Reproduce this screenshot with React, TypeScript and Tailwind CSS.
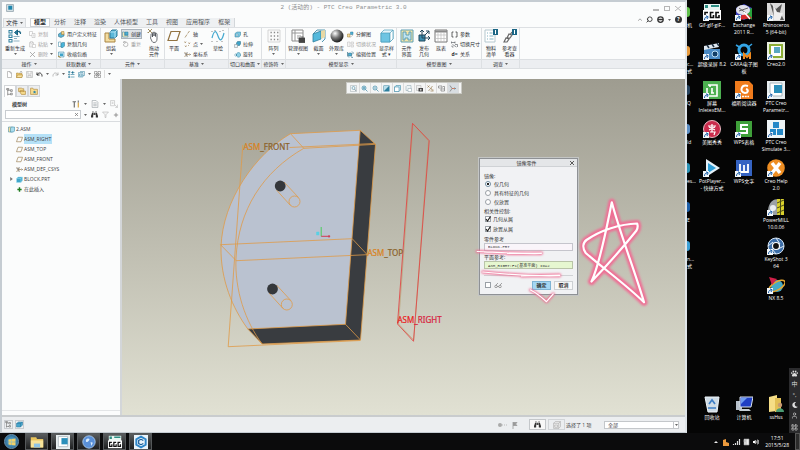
import React, { ReactNode, useState } from "react";
import { FaPaw, FaMoon, FaVolumeUp, FaWindows, FaBinoculars } from "react-icons/fa";
import { Search, User, LayoutGrid } from "lucide-react";

type IconProps = { name: string; className?: string };

const TEAL = "#2f7f9d";
const DARK = "#4a4f55";

// all toolbar drawings share a 14 x 14 grid
const glyphs: Record<string, ReactNode> = {
  regenerate: (
    <g fill="none" strokeWidth="1">
      <rect x="1" y="1.5" width="3" height="2.5" stroke={TEAL} />
      <rect x="1" y="6" width="3" height="2.5" stroke={TEAL} />
      <rect x="1" y="10.5" width="3" height="2.5" stroke={TEAL} />
      <path d="M5.5 7.5h6M5.5 12h6M6 9.5h3" stroke="#8fb3c4" />
      <path d="M6.5 3.5l3-2.5v5zM10 2.5c2-.8 3 .4 2.5 2.5" stroke="#16607f" fill="#2b7d9c" />
    </g>
  ),
  copy: (
    <g fill="#fff" stroke="#b0b0b0">
      <path d="M1 1h6v8H1z" />
      <path d="M6 5h6v8H6zM8 8h3M8 10h3" />
    </g>
  ),
  paste: (
    <g fill="#eee" stroke="#b5b5b5">
      <path d="M1 3h8v9H1z" />
      <path d="M3 1h4v3H3zM7 7h6v6H7z" fill="#fff" />
    </g>
  ),
  cross: <path d="M2 2l10 10M12 2L2 12" stroke="#999" strokeWidth="1.5" fill="none" />,
  userFeature: (
    <g>
      <path d="M1 6l5-3 6 2v5l-6 3-5-2z" fill="#5db4d4" stroke="#23627e" />
      <path d="M7 1h5v6H7z" fill="#f0d28a" stroke="#a07830" />
    </g>
  ),
  copyGeom: (
    <g>
      <path d="M1 2h5v9H1z" fill="#fff" stroke={TEAL} />
      <path d="M6 5l3-2h4v7l-3 3H6z" fill="#49b4d8" stroke="#28728f" />
    </g>
  ),
  shrink: (
    <g>
      <path d="M1 2h11v10H1z" fill="#cfe9f3" stroke={TEAL} />
      <path d="M4 5h6v5H4z" fill="#3ea3c8" />
      <path d="M0 10l5 3" stroke="#b98a2b" strokeWidth="2" />
    </g>
  ),
  assemble: (
    <g>
      <path d="M1 4h4v6h6v3H1z" fill="#f3dda0" stroke="#a98544" />
      <path d="M6 3l2-2h5v6l-2 2H6z" fill="#5ab8da" stroke="#2b7898" />
      <path d="M6 3h5v6M11 3l2-2" fill="none" stroke="#d5f1fb" strokeWidth=".7" />
    </g>
  ),
  create: (
    <g>
      <path d="M1 2h4v7h7v3H1z" fill="#f7e8b9" stroke={TEAL} />
      <path d="M6 2h6v6H6z" fill="#4fb0d4" stroke="#2b7898" />
    </g>
  ),
  repeat: (
    <path d="M3 6a4.500 4.500 0 1 0 3-3.500M6 0v5l-4-2.500z" fill="none" stroke="#999" strokeWidth="1.2" />
  ),
  hand: (
    <g fill="none" strokeWidth=".8">
      <path d="M4 7V5.500c0-1 1.500-1 1.500 0V8 4c0-1 1.500-1 1.500 0v3-3c0-1 1.500-1 1.500 0v3.500V5c0-1 1.500-.8 1.500 0v5c0 2-1 3.500-3 3.500S5 12 3.500 9z" fill="#fff" stroke={DARK} />
      <path d="M1 0l4 4M5 0L1 4M1 4v-1M1 0h1" stroke="#8c7440" />
    </g>
  ),
  plane: <path d="M4 2.500h9l-3 9H1z" fill="none" stroke="#927342" strokeWidth="1.200" />,
  axis: <path d="M2 13L6 7M8 4l3-4M6.500 6l.8-1" stroke="#8d6d3b" strokeWidth="1.300" fill="none" />,
  points: <path d="M1 1l3 3M4 1L1 4M9 3l3 3M12 3L9 6M2 9l3 3M5 9l-3 3M8 9h2" stroke="#8d6d3b" fill="none" />,
  csys: (
    <g fill="none" stroke="#8d6d3b">
      <path d="M4 7h9M4 7l-3-5M4 7l-3 5M4 3l4 4-4 4" />
      <path d="M11 5l2 2-2 2M1 4l3 3M7 2l-3 5 3 5" stroke={DARK} />
    </g>
  ),
  sketch: (
    <g fill="none">
      <path d="M1 9c2-8 4-8 6-2s4 5 6-3" stroke="#46a9cf" strokeWidth="1.200" />
      <path d="M1 2v1M4 1v1M9 2v1M12 1v1M1 12v1M6 12v1M11 12v1" stroke="#888" />
    </g>
  ),
  hole: (
    <g>
      <path d="M2 5l4-3h7v6l-3 4H2z" fill="#7dc8e2" stroke={TEAL} />
      <ellipse cx="6" cy="8" rx="2" ry="2.500" fill="#fff" stroke={TEAL} />
    </g>
  ),
  extrude: (
    <g>
      <path d="M5 4l2-3h6v5l-2 3H5z" fill="#3ea3c8" stroke="#23657f" />
      <path d="M1 7h6v6H1z" fill="#e3f4fa" stroke="#888" />
    </g>
  ),
  revolve: (
    <g>
      <path d="M5 6c2-4 6-4 8 0v4c-2 3-6 3-8 0z" fill="#8fd0e6" stroke={TEAL} />
      <path d="M0 8h6M3 5l3 3-3 3" fill="none" stroke={TEAL} />
    </g>
  ),
  pattern: (
    <g>
      <path d="M1 1h12v12H1z" fill="#fafafa" stroke="#c5c5c5" strokeWidth=".7" />
      <path d="M3.500 3.500h8M3.500 7h8M3.500 10.500h8" stroke="#888" strokeWidth="1.300" strokeDasharray="1.300 2" />
    </g>
  ),
  viewManager: (
    <g>
      <path d="M1 1h11v11H1z" fill="#fff" stroke="#8b8b8b" />
      <path d="M1 4h11M4 1v11M6 7h4M6 9h3" stroke="#999" />
      <path d="M8 9h6v4.500H8zM9.500 8h3" fill="#444" stroke="#444" strokeWidth=".8" />
    </g>
  ),
  section: (
    <g>
      <path d="M1 5l4-4h8v9l-3 3" fill="#eaf6fb" stroke={TEAL} strokeWidth=".8" />
      <path d="M1 5l8-3v8l-8 3z" fill="#54b9dc" stroke={TEAL} strokeWidth=".8" />
      <path d="M13 1L9 2v8l4-2z" fill="#e8d8a3" />
    </g>
  ),
  explode: (
    <g>
      <path d="M1 6h5v6H1z" fill="#f3dda0" stroke="#9c7a35" />
      <path d="M7 2h5v5H7z" fill="#4fb0d4" stroke={TEAL} />
      <path d="M6 13l6-5" stroke="#999" />
    </g>
  ),
  toggleState: (
    <g fill="#f3f3f3" stroke="#b8b8b8">
      <path d="M1 2h5v9H1zM8 2h5v4H8zM8 8h5v4H8z" />
    </g>
  ),
  editPos: (
    <g fill="none" stroke="#23657f">
      <path d="M3 4h6v6H3z" fill="#4fb0d4" />
      <path d="M1 2v8l3 3M10 1l3 3-3 3M8 12l4 1" strokeWidth="1.300" />
    </g>
  ),
  cube: (
    <g stroke="#4b9dba" strokeWidth=".7">
      <path d="M1 4l3-3h9v9l-3 3H1z" fill="#e8f5fa" />
      <path d="M1 4h9v9H1z" fill="#6ec4e2" />
      <path d="M10 4l3-3v9l-3 3z" fill="#fff" />
    </g>
  ),
  shaded: (
    <g stroke={TEAL}>
      <path d="M1 4l3-3h9v9l-3 3H1z" fill="#bfe3ef" />
      <path d="M1 4h9v9H1z" fill="#fff" />
    </g>
  ),
  compIface: (
    <g fill="#f6e5a8" stroke="#5d9fb4">
      <path d="M1 1h12v12H1z" />
      <path d="M3 3h3v3h3V3h2v8H8V9H5v2H3z" fill="#bfe3ef" />
    </g>
  ),
  publish: (
    <g fill="none" stroke="#23495c">
      <path d="M2 6h6v6H2z" fill="#3c8fb0" />
      <path d="M5 9V1M3 3l2-2 2 2M5 9h8M11 7l2 2-2 2M8 6l4-4M9 2h3v3" />
    </g>
  ),
  table: (
    <g fill="none">
      <path d="M1 1h12v12H1z" fill="#fff" stroke="#777" />
      <path d="M1 2.500h12" stroke="#8a8a8a" strokeWidth="2" />
      <path d="M1 6h12M1 9.500h12M4 3v10M7 3v10M10 3v10" stroke="#bbb" strokeWidth=".7" />
    </g>
  ),
  params: <path d="M5 2H2v10h3M9 2h3v10H9" fill="none" stroke="#333" strokeWidth="1.500" />,
  dims: <path d="M1 3h7M1 1v4M8 1v4M3 7l8 5M8 7h5v5M2 9v3h3" fill="none" stroke={DARK} strokeWidth="1.200" />,
  bom: (
    <g>
      <path d="M1 1h10v12H1z" fill="#fff" stroke="#b5c8cf" />
      <path d="M3 4h1M3 7h1M3 10h1M5.500 4h3M5.500 7h4M5.500 10h4" stroke="#83b3c2" />
      <path d="M9 0h5v6H9z" fill="#1b6685" />
      <path d="M11.500 1v4" stroke="#fff" />
    </g>
  ),
  refViewer: (
    <g fill="none" stroke="#666">
      <path d="M1 13l2-4 3 1-2 3zM4 9l2-4 3 1-2 3zM7 6l2-3" strokeWidth="1.200" />
      <path d="M9 0h5v6H9z" fill="#1b6685" stroke="none" />
      <path d="M11.500 1v4" stroke="#fff" />
    </g>
  ),
  newFile: <path d="M3 1h5l3 3v9H3zM8 1v3h3" fill="#fff" stroke="#888" />,
  openFile: (
    <g stroke="#a8802f">
      <path d="M1 4h4l1 1h6v8H1z" fill="#e9c66f" />
      <path d="M3 8h11l-3 5H1z" fill="#f8e4a5" />
      <path d="M8 3c1-3 4-2 4 0" fill="none" stroke="#444" />
    </g>
  ),
  save: <path d="M1 1h12v12H1zM4 1v5h6V1M4 13V9h6v4" fill="#eee" stroke="#aaa" />,
  undo: <path d="M2 3v5h5M2 8c3-6 9-5 10 1v2" fill="none" stroke="#333" strokeWidth="2" />,
  redo: <path d="M12 3v5H7M12 8C9 2 3 3 2 9v2" fill="none" stroke="#aaa" strokeWidth="1.600" />,
  regenSmall: (
    <g fill="none" stroke={TEAL} strokeWidth="1.300">
      <path d="M1 1h3v2H1zM1 6h3v2H1zM1 11h3v2H1zM6 7h7M6 12h7" />
      <path d="M7 3l3-2v4zM10 3h3" fill="#16607f" />
    </g>
  ),
  winDrop: (
    <g fill="none" stroke={TEAL}>
      <path d="M1 3h9v9H1z" fill="#e0f1f7" />
      <path d="M4 1h9v8h-3M3 6h5v4H3z" />
    </g>
  ),
  closeWin: <path d="M1 1h5v5H1zM8 1h5v5H8zM1 8h5v5H1zM8 8h5v5H8zM4 4l6 6M10 4l-6 6" fill="none" stroke="#666" />,
  treeTab: (
    <g fill="none" stroke="#555">
      <path d="M3 1v12M3 4h5M3 11h5" />
      <path d="M1 1h4v2H1zM8 3h3v3H8zM8 9h3v3H8z" fill="#fff" />
    </g>
  ),
  folders: <path d="M1 2h5l1 1h3v5H1zM4 6h4l1 1h4v6H6L4 10z" fill="#f6dc90" stroke="#a77d2c" />,
  favFolder: (
    <g>
      <path d="M1 2h4l1 2h7v9H1z" fill="#f6dc90" stroke="#a77d2c" />
      <path d="M8 6l1 2h2l-1.500 1.500.5 2L8 10.500l-2 1 .5-2L5 8h2z" fill="#2e86aa" />
    </g>
  ),
  tools: (
    <g fill="none" strokeWidth="2">
      <path d="M1 3h6M4 3v10" stroke="#6b6b6b" />
      <path d="M11 1v4" stroke="#777" />
      <path d="M11 5v8" stroke="#d6a33b" />
    </g>
  ),
  list: <path d="M2 1h7l3 3v9H2zM4 5h6M4 7.500h6M4 10h6" fill="#fff" stroke="#8a9298" />,
  listOff: <path d="M1 1h7v9H1zM3 4h3M3 6h3M8 8l5 5M13 8v5H9" fill="none" stroke="#b5b5b5" />,
  filter: <path d="M1 2h12L8 7.500V13H6V7.500z" fill="#f5f5f5" stroke="#aaa" />,
  plus: <path d="M7 2v10M2 7h10" stroke="#888" strokeWidth="2" fill="none" />,
  insert: <path d="M7 1v12M1 7h12" stroke="#1f7a1f" strokeWidth="4" fill="none" />,
  asm: (
    <g>
      <path d="M1 2h8v10H1z" fill="#f4df9f" stroke={TEAL} />
      <path d="M5 4l2-2h6v8l-2 2H5z" fill="#a9dcee" stroke={TEAL} />
    </g>
  ),
  part: <path d="M1 5l3-3h9v7l-3 4H1zM1 5h9v7M10 5l3-3" fill="#3fa5ca" stroke="#a6e0f3" />,
  refit: (
    <g fill="none" stroke="#7b8a92">
      <path d="M1 1h12v12H1z" strokeWidth=".7" />
      <circle cx="7" cy="6" r="3" stroke={TEAL} />
      <path d="M9 8l3 4" strokeWidth="1.500" />
    </g>
  ),
  zoomIn: (
    <g fill="none" stroke={TEAL} strokeWidth="1.300">
      <circle cx="6" cy="6" r="4" fill="#d5edf6" />
      <path d="M9 9l4 4M4 6h4M6 4v4" />
    </g>
  ),
  zoomOut: (
    <g fill="none" stroke={TEAL} strokeWidth="1.300">
      <circle cx="6" cy="6" r="4" fill="#e9f5fa" />
      <path d="M9 9l4 4M4 6h4" />
    </g>
  ),
  repaint: (
    <g>
      <path d="M1 1h12v12H1z" fill="#2c7f9e" />
      <path d="M2 2h10L2 12z" fill="#b9deea" />
    </g>
  ),
  saved: (
    <g fill="#eef3f5" stroke="#8aa2ac">
      <path d="M2 3l2-2h8v8l-2 2H2z" />
      <path d="M6 7h7v6H6z" fill="#fff" />
    </g>
  ),
  camera: (
    <g>
      <path d="M1 1h9v10H1z" fill="#eee" stroke="#aaa" />
      <path d="M5 6h9v7H5z" fill="#444" />
      <circle cx="9.500" cy="9.500" r="1.800" fill="#ccc" />
    </g>
  ),
  datums: <path d="M1 1l4 4M5 1L1 5M3 12L11 2M8 6l2 4h3M7 12h6" fill="none" stroke="#8d6d3b" strokeWidth="1.200" />,
  annot: <path d="M1 2h7v4H1zM6 8h7v4H6zM10 3h3v5" fill="#fff" stroke="#666" strokeWidth="1.200" />,
  spin: (
    <g fill="none" strokeWidth="1.300">
      <path d="M2 1l4 6-4 6" stroke="#666" />
      <path d="M6 7h7" stroke="#c8502c" />
      <path d="M11 5l2 2-2 2" stroke={TEAL} />
    </g>
  ),
  model3d: <path d="M1 5l4-3h8v6l-4 4H1zM1 5h8v7M9 5l4-3" fill="#48a5cc" stroke="#26759a" />,
  boxSel: <path d="M1 4l3-3h9v9l-3 3H1zM1 4h9v9M10 4l3-3M3 7h5v4H3z" fill="#eee" stroke="#a5a5a5" />,
};

const Ico = ({ name, className = "size-[7px]" }: IconProps) => (
  <svg viewBox="0 0 14 14" className={`${className} shrink-0`} aria-hidden="true">
    {name === "sphere" ? (
      <>
        <defs>
          <radialGradient id="ball" cx=".35" cy=".3" r=".7">
            <stop offset="0" stopColor="#fff" />
            <stop offset=".5" stopColor="#777" />
            <stop offset="1" stopColor="#1d1d1d" />
          </radialGradient>
        </defs>
        <circle cx="7" cy="7" r="6.500" fill="url(#ball)" />
      </>
    ) : (
      glyphs[name]
    )}
  </svg>
);

const Caret = () => (
  <svg viewBox="0 0 6 4" className="h-[2px] w-[3px] shrink-0" aria-hidden="true">
    <path d="M0 0h6L3 4z" fill="#666" />
  </svg>
);

const Big = ({ icon, lines, caret, w = "w-[22px]" }: { icon: string; lines: string[]; caret?: boolean; w?: string }) => (
  <button className={`${w} flex shrink-0 flex-col items-center`}>
    <Ico name={icon} className="size-[14px]" />
    <span className="mt-[2px] flex flex-col whitespace-nowrap">
      {lines.map((l) => (
        <span key={l}>{l}</span>
      ))}
    </span>
    {caret && <span className="mt-[2px] flex"><Caret /></span>}
  </button>
);

type SmallItem = { icon?: string; mark?: string; text: string; off?: boolean; caret?: boolean; on?: boolean };

const Stack = ({ items }: { items: SmallItem[] }) => (
  <div className="flex flex-col">
    {items.map((it) => (
      <button
        key={it.text}
        className={`flex h-[10px] items-center gap-[2px] px-px whitespace-nowrap ${
          it.off ? "text-[#a3a3a3]" : ""
        } ${it.on ? "bg-[#dfe3e7] outline outline-[#aab3bb] -outline-offset-1" : ""}`}
      >
        {it.icon ? <Ico name={it.icon} /> : <b className="w-[7px]">{it.mark}</b>}
        {it.text}
        {it.caret && <Caret />}
      </button>
    ))}
  </div>
);

const Group = ({ title, w, children }: { title: string; w: string; children: ReactNode }) => (
  <section className={`${w} flex shrink-0 flex-col border-r border-[#dde0e3]`}>
    <div className="flex h-[31px] pt-px">{children}</div>
    <div className="flex h-[10px] items-center justify-center gap-[2px] border-y border-[#dcdfe2] bg-[#eceef1] whitespace-nowrap">
      {title}
      <Caret />
    </div>
  </section>
);

const tabs = ["模型", "分析", "注释", "渲染", "人体模型", "工具", "视图", "应用程序", "框架"];

const Ribbon = () => {
  const [active, setActive] = useState("模型");

  return (
    <header className="bg-[#fbfcfc] text-[5px] leading-[6px] text-[#2c2f33]">
      <div className="flex h-[16px] items-center pr-[4px] pb-[4px] pl-[4px]">
        <svg viewBox="0 0 14 14" className="size-[8px]" aria-hidden="true">
          <path d="M1 1h12v12H1z" fill="#dce6ea" stroke="#69808c" />
          <path d="M4 3h7v7H4z" fill="#1f86ad" />
        </svg>
        <h1 className="flex-1 pl-[20px] text-center font-['Liberation_Mono','Noto_Sans_CJK_SC',monospace] text-[6px] text-[#8d8f91]">
          2 (活动的) - PTC Creo Parametric 3.0
        </h1>
        <div className="flex gap-[5px] text-[#b5b5b5]">
          <button aria-label="最小化" className="flex h-[5px] w-[6px] items-end"><i className="block h-[2px] w-full border border-current" /></button>
          <button aria-label="最大化" className="h-[5px] w-[6px] border border-current" />
          <button aria-label="关闭" className="h-[5px] w-[6px]">
            <svg viewBox="0 0 6 5"><path d="M0 0l6 5M6 0L0 5" stroke="currentColor" /></svg>
          </button>
        </div>
      </div>

      <div className="flex h-[10px] items-end border-b border-[#dde0e3] pl-px text-[6px] leading-[9px]">
        <button className="mr-[4px] flex w-[23px] items-center justify-center gap-[2px] border border-b-0 border-[#d9dcdf] bg-[#eef0f2] leading-[8px]">
          文件
          <Caret />
        </button>
        <nav className="flex border-r border-[#d3d7da] bg-[#eef0f2]">
          {tabs.map((t) => (
            <button
              key={t}
              onClick={() => setActive(t)}
              className={`h-[9px] px-[4px] whitespace-nowrap ${
                t === active ? "bg-white font-bold outline outline-[#cfd3d7] -outline-offset-1" : "text-[#55595d]"
              }`}
            >
              {t}
            </button>
          ))}
        </nav>
        <div className="ml-auto flex items-center gap-[4px] pr-[3px] pb-[4px] text-[#333]">
          <svg viewBox="0 0 6 4" className="h-[3px] w-[4px]"><path d="M0 4l3-3 3 3" fill="none" stroke="#777" /></svg>
          <Search className="size-[7px] -scale-x-100" strokeWidth={3} />
          <svg viewBox="0 0 14 14" className="size-[7px]" aria-hidden="true">
            <circle cx="7" cy="7" r="5.500" fill="#fff" stroke="#333" strokeWidth="2.500" />
            <path d="M2 7h10" stroke="#333" strokeWidth="3" />
          </svg>
          <Caret />
          <span className="grid size-[7px] place-items-center rounded-full bg-[#333] text-[5px] leading-none font-bold text-white">?</span>
        </div>
      </div>

      <div className="flex">
        <Group title="操作" w="w-[55px]">
          <Big icon="regenerate" lines={["重新生成"]} caret w="w-[26px]" />
          <Stack
            items={[
              { icon: "copy", text: "复制", off: true },
              { icon: "paste", text: "粘贴", off: true, caret: true },
              { icon: "cross", text: "删除", off: true, caret: true },
            ]}
          />
        </Group>
        <Group title="获取数据" w="w-[44px]">
          <Stack
            items={[
              { icon: "userFeature", text: "用户定义特征" },
              { icon: "copyGeom", text: "复制几何" },
              { icon: "shrink", text: "收缩包络" },
            ]}
          />
        </Group>
        <Group title="元件" w="w-[64px]">
          <Big icon="assemble" lines={["组装"]} caret w="w-[20px]" />
          <Stack
            items={[
              { icon: "create", text: "创建", on: true },
              { icon: "repeat", text: "重复", off: true },
            ]}
          />
          <Big icon="hand" lines={["拖动", "元件"]} w="w-[24px]" />
        </Group>
        <Group title="基准" w="w-[64px]">
          <Big icon="plane" lines={["平面"]} w="w-[18px]" />
          <Stack
            items={[
              { icon: "axis", text: "轴" },
              { icon: "points", text: "点", caret: true },
              { icon: "csys", text: "坐标系" },
            ]}
          />
          <Big icon="sketch" lines={["草绘"]} w="w-[18px]" />
        </Group>
        <Group title="切口和曲面" w="w-[33px]">
          <div className="pl-[4px]">
            <Stack
              items={[
                { icon: "hole", text: "孔" },
                { icon: "extrude", text: "拉伸" },
                { icon: "revolve", text: "旋转" },
              ]}
            />
          </div>
        </Group>
        <Group title="修饰符" w="w-[24px]">
          <Big icon="pattern" lines={["阵列"]} caret w="w-[23px]" />
        </Group>
        <Group title="模型显示" w="w-[111px]">
          <Big icon="viewManager" lines={["管理视图"]} caret w="w-[24px]" />
          <Big icon="section" lines={["截面"]} caret w="w-[17px]" />
          <Big icon="sphere" lines={["外观库"]} caret w="w-[19px]" />
          <Stack
            items={[
              { icon: "explode", text: "分解图" },
              { icon: "toggleState", text: "切换状况", off: true },
              { icon: "editPos", text: "编辑位置" },
            ]}
          />
          <Big icon="cube" lines={["显示样", "式 ▾"]} w="w-[19px]" />
        </Group>
        <Group title="模型意图" w="w-[85px]">
          <Big icon="compIface" lines={["元件", "界面"]} w="w-[19px]" />
          <Big icon="publish" lines={["发布", "几何"]} w="w-[16px]" />
          <Big icon="table" lines={["族表"]} w="w-[18px]" />
          <Stack
            items={[
              { icon: "params", text: "参数" },
              { icon: "dims", text: "切换尺寸" },
              { mark: "d=", text: "关系" },
            ]}
          />
        </Group>
        <Group title="调查" w="w-[38px]">
          <Big icon="bom" lines={["物料", "清单"]} w="w-[18px]" />
          <Big icon="refViewer" lines={["参考查", "看器"]} w="w-[19px]" />
        </Group>
        <div className="flex flex-1 flex-col justify-end">
          <div className="h-[10px] border-y border-[#dcdfe2] bg-[#eceef1]" />
        </div>
      </div>

      <div className="flex h-[10px] items-center gap-[3px] pl-[4px]">
        <Ico name="newFile" />
        <Ico name="openFile" />
        <Ico name="save" />
        <Ico name="undo" />
        <Caret />
        <Ico name="redo" />
        <Caret />
        <Ico name="regenSmall" />
        <Ico name="winDrop" />
        <Caret />
        <Ico name="closeWin" />
        <i className="h-[8px] border-l border-[#ddd]" />
        <Caret />
      </div>
    </header>
  );
};

const treeRows = [
  { icon: "plane", text: "ASM_RIGHT", selected: true },
  { icon: "plane", text: "ASM_TOP" },
  { icon: "plane", text: "ASM_FRONT" },
  { icon: "csys", text: "ASM_DEF_CSYS" },
  { icon: "part", text: "BLOCK.PRT", branch: true },
  { icon: "insert", text: "在此插入" },
];

const ModelTree = () => (
  <aside className="flex w-[120px] shrink-0 flex-col border-r-2 border-[#d3d6d9] bg-[#fbfcfc] text-[5px] leading-[6px] text-[#3c4043]">
    <div className="mt-[6px] flex h-[12px] pl-[2px]">
      {["treeTab", "folders", "favFolder"].map((n, i) => (
        <button
          key={n}
          aria-label={n}
          className={`grid w-[12px] place-items-center border border-[#d3d6d9] ${i ? "bg-[#eceef0]" : "border-b-0 bg-white"}`}
        >
          <Ico name={n} className="size-[8px]" />
        </button>
      ))}
    </div>
    <div className="flex h-[13px] items-center pr-[2px] pl-[10px]">
      <h2 className="flex-1 font-bold">模型树</h2>
      <div className="flex items-center gap-[4px]">
        <Ico name="tools" className="size-[8px]" />
        <Caret />
        <Ico name="list" className="size-[8px]" />
        <Caret />
        <Ico name="listOff" className="size-[8px]" />
      </div>
    </div>
    <div className="flex h-[12px] items-center border-b border-[#d9dcdf] pr-px pb-[2px] pl-[3px]">
      <div className="flex h-[9px] flex-1 items-center border border-[#c8ccd0] bg-white pr-[2px]">
        <input aria-label="搜索" className="min-w-0 flex-1 outline-none" />
        <button aria-label="清除" className="flex text-[#777]">
          <svg viewBox="0 0 6 6" className="size-[3px]"><path d="M0 0l6 6M6 0L0 6" stroke="currentColor" strokeWidth="1.500" /></svg>
        </button>
      </div>
      <div className="ml-[3px] flex items-center gap-[4px]">
        <Caret />
        <FaBinoculars className="size-[7px] text-[#333]" />
        <Ico name="filter" />
        <Ico name="plus" className="size-[6px]" />
      </div>
    </div>
    <ul className="flex-1 border-b border-[#e3e5e7] pt-[2px]">
      <li className="flex h-[10px] items-center gap-px pl-[6px]">
        <Ico name="asm" />
        2.ASM
      </li>
      {treeRows.map((r) => (
        <li key={r.text} className="flex h-[10px] items-center gap-px pl-[6px]">
          <span className="grid w-[7px] place-items-center">
            {r.branch && (
              <svg viewBox="0 0 4 6" className="h-[4px] w-[3px]"><path d="M0 0l4 3-4 3z" fill="#777" /></svg>
            )}
          </span>
          <Ico name={r.icon} className={r.icon === "insert" ? "mx-px size-[5px]" : "size-[7px]"} />
          <span className={`py-[2px] pr-px ${r.selected ? "bg-[#b5e1f7]" : ""}`}>{r.text}</span>
        </li>
      ))}
    </ul>
    <div className="h-[4px]" />
  </aside>
);

const viewTools = ["refit", "zoomIn", "zoomOut", "repaint", "shaded", "saved", "camera", "datums", "annot", "spin"];

const Model = () => (
  <svg viewBox="122 79 562 336" className="absolute inset-0 size-full" role="img" aria-label="模型">
    <path d="M290 133.700L359.700 130.300 345 324.300 247.300 329C232 308 220 280 220.500 247 222 200 255 154 290 133.700z" fill="#bac2d0" />
    <path d="M359.700 130.300L375 144.300 360 340 261.700 344 247.300 329 345 324.300z" fill="#393c40" />
    <g fill="none" stroke="#e09a48" strokeWidth=".8">
      <path d="M290 133.700L359.700 130.300 345 324.300 247.300 329C232 308 220 280 220.500 247 222 200 255 154 290 133.700z" />
      <path d="M303.300 148.300L375 144.300 360 340 261.700 344C245 322 234 290 235.500 258 238 210 262 172 303.300 148.300z" />
      <path d="M290 133.700l13.300 14.600M359.700 130.300L375 144.300M345 324.300L360 340M247.300 329l14.400 15" />
      <path d="M360 340.500L227.700 346.700 242.300 145M289 147.500l85-4" />
      <path d="M220 244.700l131.700-6 15 16-131 6z" />
      <circle cx="294" cy="201.500" r="5.500" />
      <circle cx="286.300" cy="304.500" r="5.500" />
      <path d="M276 190l14 15.500M283.500 182l14.500 15.500M268.500 293l14 15.500M276 285l14.300 15.500" />
    </g>
    <circle cx="279.700" cy="186" r="5.400" fill="#34373b" />
    <circle cx="272" cy="289" r="5.400" fill="#34373b" />
    <path d="M412.600 124l15.400 17-14.800 199-15.200-16z" fill="none" stroke="#b99a66" strokeWidth=".6" />
    <path d="M412 123.300l16.700 17.400L413 341.300 397 324z" fill="none" stroke="#e04848" strokeWidth=".9" />
    <g strokeWidth=".9" fill="none">
      <path d="M320.700 236.300V227" stroke="#3ccf4e" />
      <path d="M320.700 236.300h9M328.500 235v2.600" stroke="#d22a45" />
      <path d="M316 232h2.500v3H316z" fill="#5ad0e4" stroke="#5ad0e4" strokeWidth=".5" />
    </g>
    <g className="font-['Noto_Sans',sans-serif] text-[8px]" strokeWidth=".2">
      <text x="243" y="150" fill="#8b6128" stroke="#8b6128">
        <tspan fill="#d98220" stroke="#d98220">ASM</tspan>_FRONT
      </text>
      <text x="367" y="256" fill="#8b6128" stroke="#8b6128">
        <tspan fill="#d98220" stroke="#d98220">ASM</tspan>_TOP
      </text>
      <text x="397" y="323" fill="#d8203c" stroke="#d8203c">
        <tspan fill="#ea1c1c" stroke="#ea1c1c">ASM</tspan>_RIGHT
      </text>
    </g>
  </svg>
);

const underlines = (
  <>
    <path d="M476.700 251.500c15 .5 40 2.500 64 2M507 253.500l34-.5" />
    <path d="M482.300 272c20 2 50 4.500 77 3.700M521 276l38-1" />
    <path d="M530 290c6 3 12 8 16 11.700l6.700-7.700" />
  </>
);

const star = (
  <path d="M591 281.500C600 262 606 228 611.300 202.300 619 232 636 276 643.500 302.300 625 284 602 268 585 252.700 582 248 582 243 586 240 600 230 620 224 636.700 223.500 637.500 226 637.500 228 636 230.500 622 248 606 266 591 281.500" />
);

const Marks = () => (
  <svg viewBox="122 79 562 336" className="pointer-events-none absolute inset-0 size-full" fill="none" strokeLinecap="round" strokeLinejoin="round" aria-hidden="true">
    <defs>
      <filter id="glow" x="-20%" y="-20%" width="140%" height="140%">
        <feGaussianBlur stdDeviation="1" />
      </filter>
    </defs>
    <g stroke="#ef6e94" filter="url(#glow)">
      <g strokeWidth="3">{underlines}</g>
      <g strokeWidth="7">{star}</g>
    </g>
    <g stroke="#fff">
      <g strokeWidth="1.200">{underlines}</g>
      <g strokeWidth="2.200">{star}</g>
    </g>
  </svg>
);

const Radio = ({ label, checked }: { label: string; checked?: boolean }) => (
  <label className="flex h-[9px] items-center gap-[3px]">
    <input
      type="radio"
      name="mirror"
      defaultChecked={checked}
      className="size-[6px] appearance-none rounded-full border border-[#9aa0a6] bg-white checked:border-[#6f8ca0] checked:bg-[radial-gradient(#222_45%,#fff_55%)]"
    />
    {label}
  </label>
);

const Check = ({ label, checked }: { label: ReactNode; checked?: boolean }) => (
  <label className="flex h-[10px] items-center gap-[2px]">
    <span className="relative flex">
      <input type="checkbox" defaultChecked={checked} className="peer size-[6px] appearance-none border border-[#9aa0a6] bg-white" />
      <svg viewBox="0 0 6 6" className="pointer-events-none absolute inset-0 size-[6px] opacity-0 peer-checked:opacity-100">
        <path d="M1 3l1.500 2L5.500.5" fill="none" stroke="#222" strokeWidth="1.200" />
      </svg>
    </span>
    {label}
  </label>
);

const MirrorDialog = () => (
  <form
    onSubmit={(e) => e.preventDefault()}
    className="absolute top-[79px] left-[357px] w-[99px] border border-[#8e9195] bg-[#f1f2f4] text-[5px] leading-[6px] text-[#333] outline outline-[#c3c5c4]"
  >
    <div className="flex h-[8px] items-center border-b border-[#cfd2d5] bg-[#e4e6e8] px-[3px]">
      <h2 className="flex-1 text-center">镜像零件</h2>
      <button type="button" aria-label="关闭">
        <svg viewBox="0 0 6 6" className="size-[4px]"><path d="M0 0l6 6M6 0L0 6" stroke="#444" strokeWidth="1.300" /></svg>
      </button>
    </div>
    <div className="px-[4px] pt-[6px]">
      <fieldset>
        <legend>镜像:</legend>
        <div className="pl-px">
          <Radio label="仅几何" checked />
          <Radio label="具有特征的几何" />
          <Radio label="仅放置" />
        </div>
      </fieldset>
      <fieldset className="mt-[2px]">
        <legend>相关性控制:</legend>
        <div className="pl-px">
          <Check label="几何从属" checked />
          <Check label="放置从属" checked />
        </div>
      </fieldset>
      <label htmlFor="partRef" className="mt-[2px] block">零件参考</label>
      <input
        id="partRef"
        defaultValue="BLOCK.PRT"
        className="mt-px block h-[8px] w-full border border-[#c5c5cc] bg-[#faf5fa] px-[3px] font-['Liberation_Mono','Noto_Sans_CJK_SC',monospace] text-[4px]"
      />
      <label htmlFor="planeRef" className="mt-[3px] block">平面参考:</label>
      <input
        id="planeRef"
        defaultValue="ASM_RIGHT:F1(基准平面) ID=2"
        className="mt-px block h-[8px] w-full border border-[#b9c4a8] bg-[#e6f7d0] px-[3px] font-['Liberation_Mono','Noto_Sans_CJK_SC',monospace] text-[4px]"
      />
      <div className="mt-[6px] flex h-[19px] items-center gap-[3px] border-t border-[#d0d2d5] pl-px">
        <Check
          label={
            <svg viewBox="0 0 18 10" className="ml-px h-[5px] w-[9px]" role="img" aria-label="预览">
              <circle cx="4" cy="7" r="2.500" fill="none" stroke="#555" />
              <circle cx="12" cy="7" r="2.500" fill="none" stroke="#555" />
              <path d="M6.500 7h3M4 4l4-4M12 4l4-4" fill="none" stroke="#555" />
            </svg>
          }
        />
        <button className="ml-auto h-[9px] w-[19px] border border-[#7fb4d4] bg-[#a5d7f3] font-bold leading-[7px]">确定</button>
        <button type="button" className="h-[9px] w-[19px] border border-[#cdd0d3] bg-[#f8f8f9] font-bold leading-[7px]">取消</button>
      </div>
    </div>
  </form>
);

const StatusBar = () => (
  <footer className="flex h-[17px] shrink-0 items-center border-t-2 border-[#c9ccce] bg-[#eceef0] pr-[6px] pl-[2px] text-[5px] leading-[6px] text-[#444]">
    <button aria-label="模型树" className="grid size-[9px] place-items-center border border-[#c9ccd0]"><Ico name="treeTab" /></button>
    <button aria-label="浏览器" className="ml-[2px] grid size-[9px] place-items-center border border-[#c9ccd0]"><Ico name="model3d" /></button>
    <div className="ml-auto flex items-center">
      <svg viewBox="0 0 22 8" className="mr-[11px] h-[8px] w-[22px]" aria-hidden="true">
        <circle cx="4" cy="4" r="2" fill="#aaa" />
        <path d="M6 4h5" stroke="#bbb" strokeDasharray="1 1" />
        <path d="M17 1v7M17 1.500h4L19.500 3l1.500 1.500H17" stroke="#999" fill="#999" strokeWidth=".8" />
      </svg>
      <button aria-label="查找" className="grid h-[11px] w-[17px] place-items-center border border-[#c4c7ca] bg-[#f8f8f8]">
        <FaBinoculars className="size-[7px] text-[#333]" />
      </button>
      <button aria-label="选择框" className="ml-[2px] grid h-[11px] w-[17px] place-items-center border border-[#d2d5d8]"><Ico name="boxSel" className="size-[8px]" /></button>
      <span className="w-[39px] pl-px whitespace-nowrap">选择了 1 项</span>
      <div className="relative flex">
        <select aria-label="过滤器" className="h-[8px] w-[75px] appearance-none border border-[#c4c7ca] bg-white pl-[3px] leading-[6px]">
          <option>全部</option>
        </select>
        <span className="pointer-events-none absolute inset-y-0 right-0 grid w-[6px] place-items-center border-l border-[#c4c7ca]"><Caret /></span>
      </div>
    </div>
  </footer>
);

// desktop shortcut drawings, 18 x 18 grid
const shortcuts: Record<string, ReactNode> = {
  gif: (
    <g fill="none">
      <path d="M1 1h16v7H1z" fill="#e9f5f2" />
      <path d="M2 2h3v3H2zM8 2h8v2H8z" fill="#2d8f84" />
      <path d="M0 7h18v10H0z" fill="#fff" />
      <path d="M5 9.500H2v5h3V12M10.500 9.500h-3v5h3V12M16 9.500h-3v5h3V12" stroke="#111" strokeWidth="1.600" />
    </g>
  ),
  exchange: (
    <g>
      <path d="M1 5l8-4 8 4v8l-8 4-8-4z" fill="#3a3fc0" />
      <path d="M9 8l8 9V5z" fill="#28a43c" />
      <path d="M9 8l-5 9 13-2z" fill="#d92b2b" />
      <ellipse cx="8" cy="7" rx="7" ry="5" fill="#e2e2ea" />
      <path d="M4 8l9-3M4 5l7 5" stroke="#666" />
      <path d="M9 9l6 7" stroke="#fff" strokeWidth="1.500" />
    </g>
  ),
  rhino: (
    <g>
      <path d="M0 0h18v18H0z" fill="#d9d9d9" />
      <path d="M3 0l6 6 6-5-2 8 4 8H8z" fill="#555" />
      <path d="M6 1l4 8 6 1-3 7H7z" fill="#efefef" />
    </g>
  ),
  recorder: (
    <g>
      <path d="M1 7h16v10H1z" fill="#4a8ac4" />
      <path d="M1 4l15-3v4L1 8z" fill="#dfe8f0" />
      <path d="M4 3l2 3M9 2l2 3M14 1l2 3" stroke="#234" strokeWidth="1.500" />
      <circle cx="12" cy="12" r="3" fill="#123d66" stroke="#b9ddf5" />
    </g>
  ),
  caxa: (
    <g fill="none">
      <circle cx="9" cy="8" r="5" stroke="#34a5e6" strokeWidth="3" />
      <path d="M1 3l5 3M17 2l-5 4M3 14l3-4" stroke="#34a5e6" strokeWidth="1.500" />
      <path d="M9 17v-5l3 3 3-3v5" stroke="#ef8a1e" strokeWidth="2" />
    </g>
  ),
  creo2: (
    <g>
      <path d="M0 0h18v18H0z" fill="#e9efdf" />
      <path d="M3 3h12v12H3z" fill="#fff" stroke="#8dae35" strokeWidth="2" />
      <path d="M7 5h6v6H7z" fill="#58a8c2" />
    </g>
  ),
  inletex: (
    <g fill="none">
      <path d="M0 0h18v18H0z" fill="#4caf50" />
      <path d="M5 4h9v11H4V7M9 7v5M8 12h3M7 4v2" stroke="#fff" strokeWidth="1.600" />
    </g>
  ),
  foxit: (
    <g fill="none">
      <path d="M0 0h14l4 4v14H0z" fill="#f07c1d" />
      <path d="M13 5c-7-2-9 6-3 7 3 0 4-3 1-4" stroke="#fff" strokeWidth="2" />
      <path d="M7 15.500h7" stroke="#fff" strokeDasharray="2 .7" strokeWidth="1.500" />
    </g>
  ),
  creoParam: (
    <g>
      <path d="M0 0h18v18H0z" fill="#e8eef0" />
      <path d="M3 2h12v13H3z" fill="#fff" stroke="#a9b6bd" />
      <path d="M7 4h8v8H7z" fill="#2a8fba" />
    </g>
  ),
  meitu: (
    <g fill="none">
      <circle cx="9" cy="9" r="8.500" fill="#c92b4c" stroke="#e9b9c2" />
      <path d="M5 6h8M9 4v8M6 10l6-3M6 7l6 3M7 12h5l-1 3" stroke="#fff" strokeWidth="1.200" />
    </g>
  ),
  wpsS: (
    <g fill="none">
      <path d="M1 1h16v16H1z" fill="#3fa03a" />
      <path d="M13 5H6v4h6v4H5" stroke="#fff" strokeWidth="2" />
    </g>
  ),
  simulate: (
    <g>
      <path d="M0 0h18v18H0z" fill="#eef4f6" />
      <path d="M6 2h6v6H6zM3 9h6v6H3zM10 9h6v6h-6z" fill="#2588c7" />
    </g>
  ),
  pot: (
    <g>
      <path d="M3 0l14 9L3 18z" fill="#e5f1f8" />
      <path d="M5 4l8 5-8 5z" fill="#2f9fd8" />
    </g>
  ),
  wpsW: (
    <g fill="none">
      <path d="M1 1h16v16H1z" fill="#3563c2" />
      <path d="M5 5v8h4V6v7h4V5" stroke="#fff" strokeWidth="1.800" />
    </g>
  ),
  creoHelp: (
    <g fill="none">
      <circle cx="9" cy="9" r="8.800" fill="#ee8e23" />
      <path d="M5 4l8 10M13 4L5 14" stroke="#fff" strokeWidth="3.500" />
    </g>
  ),
  powermill: (
    <g>
      <path d="M1 12C2 4 6 1 12 1v16H1z" fill="#9aa0a5" />
      <path d="M10 1h7v16h-7z" fill="#d7cf2d" />
      <path d="M10 5l7-3M10 10l7-3M10 15l7-3M13.500 1v16" stroke="#4a4a18" />
      <circle cx="6" cy="10" r="3" fill="#e9edf0" />
    </g>
  ),
  keyshot: (
    <g fill="none">
      <circle cx="9" cy="9" r="8" fill="#3d6ea8" stroke="#d5e5f5" />
      <circle cx="9" cy="9" r="3.500" fill="#111" stroke="#fff" strokeWidth="1.200" />
      <path d="M9 1l4 6M17 9l-6 3M9 17l-4-5M1 9l5-4" stroke="#e5f0fa" />
    </g>
  ),
  nx: (
    <g fill="none">
      <circle cx="10" cy="10" r="6" fill="#45a9c5" />
      <ellipse cx="10" cy="10" rx="9" ry="4" stroke="#e8a72e" strokeWidth="1.500" transform="rotate(-30 10 10)" />
      <path d="M2 1l8 2-5 6z" fill="#d01f48" />
    </g>
  ),
  bin: (
    <g>
      <path d="M2 2h14l-2 15H5z" fill="#cfdce6" stroke="#eef5fa" />
      <path d="M6 9l3-4 3 4M5 13h8" fill="none" stroke="#3f7fc6" strokeWidth="1.700" />
    </g>
  ),
  computer: (
    <g>
      <path d="M1 6h6v9H1z" fill="#b8c2cc" />
      <path d="M5 2h13l-2 10H5z" fill="#1f3fc4" stroke="#d9e1ea" />
      <path d="M6 3h6l-6 6z" fill="#6f9cf0" />
      <path d="M5 14h9l2 2H4z" fill="#c7cfd6" />
    </g>
  ),
  userFolder: (
    <g>
      <path d="M2 2l8-2v16l-8 1z" fill="#f5dd86" />
      <path d="M8 3h6v14H8z" fill="#e2bf55" />
      <circle cx="13" cy="10" r="2.200" fill="#c99a70" />
      <path d="M9 17c0-5 8-5 8 0z" fill="#4a9a72" />
    </g>
  ),
};

const Shortcut = ({ icon, lines, link = true }: { icon: string; lines: string[]; link?: boolean }) => (
  <a href="#" className="flex h-[39px] flex-col items-center pt-[3px] whitespace-nowrap">
    <svg viewBox="0 0 18 18" className="size-[18px] shrink-0" aria-hidden="true">
      {shortcuts[icon]}
      {link && (
        <g>
          <path d="M0 12h6v6H0z" fill="#f3f7fa" />
          <path d="M1.500 17c0-2 1-3 2.500-3M3 12.800l2.200 1L4 16" fill="none" stroke="#1c5fa8" />
        </g>
      )}
    </svg>
    <span className="mt-px flex flex-col text-center leading-[7px]">
      {lines.map((l) => (
        <span key={l}>{l}</span>
      ))}
    </span>
  </a>
);

const columns = [
  [
    { icon: "gif", lines: ["Gif-gIf-giF..."] },
    { icon: "recorder", lines: ["超级录屏 8.2"] },
    { icon: "inletex", lines: ["屏幕", "InletexEM..."] },
    { icon: "meitu", lines: ["美图秀秀"] },
    { icon: "pot", lines: ["PotPlayer...", "- 快捷方式"] },
  ],
  [
    { icon: "exchange", lines: ["Exchange", "2011 R..."] },
    { icon: "caxa", lines: ["CAXA电子图", "板"] },
    { icon: "foxit", lines: ["福昕阅读器"] },
    { icon: "wpsS", lines: ["WPS表格"] },
    { icon: "wpsW", lines: ["WPS文字"] },
  ],
  [
    { icon: "rhino", lines: ["Rhinoceros", "5 (64-bit)"] },
    { icon: "creo2", lines: ["Creo2.0"] },
    { icon: "creoParam", lines: ["PTC Creo", "Parametr..."] },
    { icon: "simulate", lines: ["PTC Creo", "Simulate 3..."] },
    { icon: "creoHelp", lines: ["Creo Help", "2.0"] },
    { icon: "powermill", lines: ["PowerMILL", "10.0.06"] },
    { icon: "keyshot", lines: ["KeyShot 3", "64"] },
    { icon: "nx", lines: ["NX 8.5"] },
  ],
];

// shortcuts that are mostly hidden behind the application window
const hidden = [
  { c: "bg-[#5fbf4a]", lines: ["机"] },
  { c: "bg-[#e79a3c]", lines: ["c...", "式"] },
  { c: "bg-[#26425c]", lines: ["Q"] },
  { c: "bg-[#5b8ec4]", lines: ["ld"] },
  { c: "bg-[#2a93b5]", lines: ["es..."] },
  { c: "bg-[#1d5fa8]", lines: ["E"] },
  { c: "bg-[#3ba0d6]", lines: ["n...", "式"] },
];

const Desktop = () => (
  <section className="relative flex w-[113px] shrink-0 flex-col bg-[#050505] text-[5px] text-white">
    <div className="flex flex-1">
      <div className="w-[9px] overflow-hidden">
        {hidden.map((h, i) => (
          <div key={i} className="flex h-[39px] flex-col pt-[7px] leading-[7px]">
            <i className={`h-[10px] w-[3px] rounded-r-full ${h.c}`} />
            <span className="mt-[5px] flex flex-col">
              {h.lines.map((l) => (
                <span key={l}>{l}</span>
              ))}
            </span>
          </div>
        ))}
      </div>
      {columns.map((col, i) => (
        <div key={i} className="w-[32px]">
          {col.map((s) => (
            <Shortcut key={s.icon} {...s} />
          ))}
        </div>
      ))}
    </div>
    <div className="mb-[2px] grid grid-cols-[32px_32px_32px] pl-[9px]">
      <Shortcut icon="bin" lines={["回收站"]} link={false} />
      <Shortcut icon="computer" lines={["计算机"]} link={false} />
      <Shortcut icon="userFolder" lines={["ssHss"]} link={false} />
    </div>
    <div className="absolute right-0 bottom-0 flex h-[65px] w-[11px] flex-col items-center justify-around bg-[#2b2b2d] text-[6px] leading-none text-[#ddd]">
      <FaPaw className="size-[7px]" />
      <span>中</span>
      <span>°,</span>
      <FaMoon className="size-[6px]" />
      <User className="size-[7px]" />
      <LayoutGrid className="size-[7px]" />
    </div>
  </section>
);

const TaskButton = ({ label, children }: { label: string; children: ReactNode }) => (
  <button
    aria-label={label}
    className="grid h-full w-[23px] place-items-center border border-[#55585a] bg-linear-to-b from-[#5a5d5f] to-[#1e1f20]"
  >
    <svg viewBox="0 0 18 18" className="size-[14px]">{children}</svg>
  </button>
);

const Taskbar = () => (
  <footer className="flex h-[17px] shrink-0 items-center bg-[#0b0b0c] text-[5px] leading-[7px] text-white">
    <button aria-label="开始" className="mx-[4px] grid size-[15px] place-items-center rounded-full border border-[#6d97b5] bg-[radial-gradient(#6fc1ea,#154a72)]">
      <FaWindows className="size-[8px] text-[#f1d26a]" />
    </button>
    <div className="ml-[2px] flex h-full gap-[3px]">
      <TaskButton label="资源管理器">
        <path d="M1 3h7l1 2h8v11H1z" fill="#e8c45e" />
        <path d="M1 7h16v9H1z" fill="#f7e39a" />
        <path d="M5 11h8v5H5z" fill="#8cc3e6" />
      </TaskButton>
      <TaskButton label="Creo">{shortcuts.creoParam}</TaskButton>
      <TaskButton label="浏览器">
        <circle cx="9" cy="9" r="8" fill="#5a90d8" stroke="#b5d3f2" />
        <path d="M5 6c3-3 6-1 4 1s-3 3-4 1zM11 9l3 1-2 4z" fill="#d9ebfb" />
      </TaskButton>
      <TaskButton label="GIF">{shortcuts.gif}</TaskButton>
      <TaskButton label="Hex">
        <path d="M0 0h18v18H0z" fill="#e9f3fa" />
        <path d="M9 2l6 3.500v7L9 16l-6-3.500v-7z" fill="none" stroke="#2e86c9" strokeWidth="2.500" />
        <path d="M12 7L9 5.500 6 7v4l3 1.500 3-1.500" fill="none" stroke="#175b96" strokeWidth="1.500" />
      </TaskButton>
    </div>
    <div className="ml-auto flex h-full items-center">
      <svg viewBox="0 0 42 8" className="h-[8px] w-[42px]" aria-hidden="true">
        <path d="M3 5l2-2 2 2z" fill="#eee" />
        <path d="M12 2l3-1v3l3 1v3h-6z" fill="#eb9a3d" />
        <path d="M22.500 7V6M24.500 7V5M26.500 7V3M28.500 7V1" stroke="#ddd" strokeWidth="1.200" />
        <path d="M33 1h5v6h-5zM35 1v6M32 3h3" fill="#eee" stroke="#999" strokeWidth=".6" />
      </svg>
      <FaVolumeUp className="size-[6px]" />
      <time className="mx-[6px] flex flex-col text-center">
        <span>17:51</span>
        <span>2015/5/28</span>
      </time>
      <button aria-label="显示桌面" className="h-full w-[5px] border border-[#555] bg-[#2b2b2b]" />
    </div>
  </footer>
);

const App: React.FC = () => {
  return (
    <div className="flex h-screen flex-col overflow-hidden bg-black font-['Open_Sans','Noto_Sans_CJK_SC',sans-serif]">
      <div className="flex min-h-0 flex-1">
        <main className="flex min-w-0 flex-1 flex-col border-x-2 border-t-2 border-b border-[#c5ccd2] border-r-[#dfe4e8] bg-[#fbfcfc]">
          <Ribbon />
          <div className="flex min-h-0 flex-1">
            <ModelTree />
            <div className="relative flex-1 bg-linear-to-b from-[#9e9c90] to-[#e1e1d3]">
              <Model />
              <div className="relative flex justify-center pt-[3px]">
                <div className="flex h-[12px] border border-[#c9c9c3] bg-[#f4f5f5] px-[2px]">
                  {viewTools.map((n) => (
                    <button
                      key={n}
                      aria-label={n}
                      className={`grid w-[11px] place-items-center border-r border-[#dcdcdc] ${n === "spin" ? "bg-[#d8dde1]" : ""}`}
                    >
                      <Ico name={n} />
                    </button>
                  ))}
                </div>
              </div>
              <MirrorDialog />
              <Marks />
            </div>
          </div>
          <StatusBar />
        </main>
        <Desktop />
      </div>
      <Taskbar />
    </div>
  );
};

export default App;
